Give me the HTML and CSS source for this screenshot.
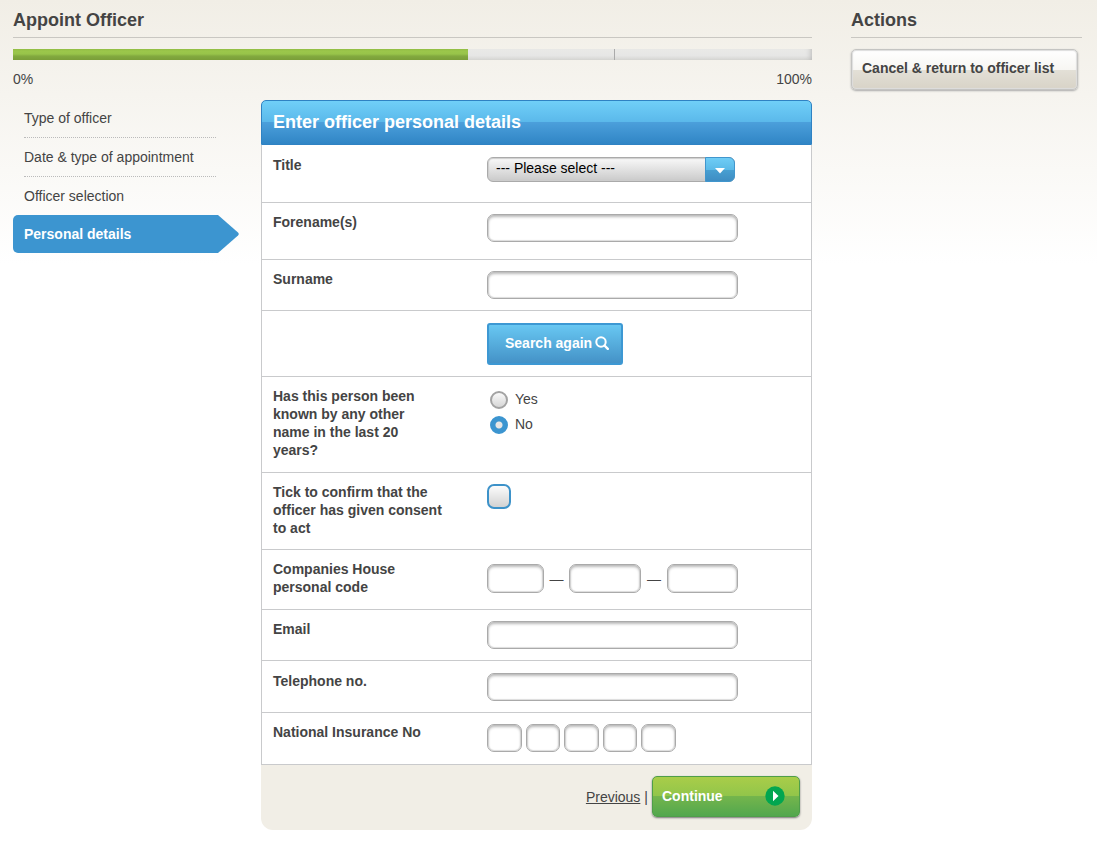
FILE: index.html
```html
<!DOCTYPE html>
<html lang="en">
<head>
<meta charset="utf-8">
<title>Appoint Officer</title>
<link rel="stylesheet" href="styles.css">
</head>
<body>
<div class="page">
  <main class="main">
    <h1 class="heading">Appoint Officer</h1>
    <div class="progress" role="progressbar" aria-label="Progress" aria-valuenow="57" aria-valuemin="0" aria-valuemax="100">
      <div class="progress-done" style="width:57%"></div>
      <div class="progress-step"></div>
    </div>
    <div class="scale"><span>0%</span><span>100%</span></div>

    <div class="columns">
      <nav class="steps" aria-label="Steps">
        <ol class="step-list">
          <li class="step">Type of officer</li>
          <li class="step">Date &amp; type of appointment</li>
          <li class="step">Officer selection</li>
          <li class="step-current" aria-current="step">
            <span class="step-name">Personal details</span>
            <svg class="step-arrow" viewBox="0 0 21 38" aria-hidden="true"><path d="M0 0 20 17.500Q21.500 19 20 20.500L0 38Z" fill="#3c95d0"/></svg>
          </li>
        </ol>
      </nav>

      <form class="form">
        <h2 class="form-title">Enter officer personal details</h2>
        <div class="form-body">
          <div class="row row-tall">
            <label class="label" for="title">Title</label>
            <div class="control">
              <span class="select-wrap">
                <select class="select" id="title"><option>--- Please select ---</option></select>
                <span class="select-arrow" aria-hidden="true"><svg width="12" height="7" viewBox="0 0 12 7"><path d="M1 1h10L6 6.500z" fill="#fff"/></svg></span>
              </span>
            </div>
          </div>
          <div class="row row-medium">
            <label class="label" for="forename">Forename(s)</label>
            <div class="control"><input class="text" id="forename" type="text"></div>
          </div>
          <div class="row">
            <label class="label" for="surname">Surname</label>
            <div class="control"><input class="text" id="surname" type="text"></div>
          </div>
          <div class="row">
            <span></span>
            <div class="control">
              <button class="search" type="button">Search again
                <svg width="14" height="14" viewBox="0 0 14 14" aria-hidden="true"><circle cx="6" cy="6" r="4.700" fill="none" stroke="#fff" stroke-width="2"/><path d="m9.500 9.500 3.300 3.300" stroke="#fff" stroke-width="2.400" stroke-linecap="round"/></svg>
              </button>
            </div>
          </div>
          <div class="row row-roomy" role="radiogroup" aria-labelledby="other-name">
            <span class="label" id="other-name">Has this person been known by any other name in the last 20 years?</span>
            <div class="control radios">
              <label class="choice"><input class="radio" type="radio" name="known">Yes</label>
              <label class="choice"><input class="radio" type="radio" name="known" checked>No</label>
            </div>
          </div>
          <div class="row row-airy">
            <label class="label" for="consent">Tick to confirm that the officer has given consent to act</label>
            <div class="control"><input class="check" id="consent" type="checkbox"></div>
          </div>
          <div class="row row-roomy">
            <label class="label" for="code1">Companies House personal code</label>
            <div class="control code">
              <input class="text" id="code1" type="text"><span>—</span>
              <input class="text" type="text" aria-label="Personal code, part 2"><span>—</span>
              <input class="text" type="text" aria-label="Personal code, part 3">
            </div>
          </div>
          <div class="row">
            <label class="label" for="email">Email</label>
            <div class="control"><input class="text" id="email" type="email"></div>
          </div>
          <div class="row row-low">
            <label class="label" for="phone">Telephone no.</label>
            <div class="control"><input class="text" id="phone" type="tel"></div>
          </div>
          <div class="row row-airy">
            <label class="label" for="ni1">National Insurance No</label>
            <div class="control ni">
              <input class="text" id="ni1" type="text">
              <input class="text" type="text" aria-label="National Insurance, part 2">
              <input class="text" type="text" aria-label="National Insurance, part 3">
              <input class="text" type="text" aria-label="National Insurance, part 4">
              <input class="text" type="text" aria-label="National Insurance, part 5">
            </div>
          </div>
        </div>
        <div class="form-footer">
          <a class="previous" href="#">Previous</a><span>|</span>
          <button class="continue" type="submit">Continue
            <svg width="20" height="20" viewBox="0 0 20 20" aria-hidden="true"><circle cx="10" cy="10" r="9.700" fill="#02a650"/><path d="M8 4.800 13.500 10 8 15.200z" fill="#fff"/></svg>
          </button>
        </div>
      </form>
    </div>
  </main>

  <aside class="actions">
    <h2 class="heading">Actions</h2>
    <button class="cancel" type="button">Cancel &amp; return to officer list</button>
  </aside>
</div>
</body>
</html>
```
FILE: styles.css
```css
* {
  box-sizing: border-box;
}

body {
  margin: 0;
  font: 14px/18px "Liberation Sans", Arial, sans-serif;
  color: #444;
  background: #fff linear-gradient(#f1eee6, #fff) 0 0 / 100% 264px no-repeat;
}

button,
input,
select {
  font: inherit;
  margin: 0;
}

.page {
  display: grid;
  grid-template-columns: minmax(0, 1fr) 231px;
  gap: 39px;
  padding: 8px 15px 12px 13px;
}

.heading {
  margin: 0 0 11px;
  padding-bottom: 5px;
  border-bottom: 1px solid #c9c7c2;
  font-size: 18px;
  line-height: 24px;
}

/* Progress */
.progress {
  display: grid;
  position: relative;
  height: 11px;
  background: linear-gradient(#e9e9e7, #e6e6e5 60%, #d5d5d2);
  box-shadow: inset -6px 0 6px -6px #aaa;
}

.progress-done {
  background: linear-gradient(#92bd45, #9bc64b 20%, #98c44a 45%, #82a93f 65%, #7a9e38);
}

.progress-step {
  position: absolute;
  left: 75%;
  width: 1px;
  height: 100%;
  margin-left: 2px;
  background: #aaa;
}

.scale {
  display: flex;
  justify-content: space-between;
  padding: 10px 0 12px;
}

.columns {
  display: grid;
  grid-template-columns: 226px minmax(0, 1fr);
  gap: 22px;
  align-items: start;
}

/* Steps */
.step-list {
  margin: -1px 0 0;
  padding: 0;
  list-style: none;
}

.step {
  margin: 0 23px 0 11px;
  padding: 10px 0;
  border-bottom: 1px dotted #bbb;
}

.step-current {
  display: flex;
  height: 38px;
  margin-top: -1px;
  color: #fff;
  font-weight: bold;
}

.step-name {
  flex: 1;
  padding: 10px 0 10px 11px;
  border-radius: 5px 0 0 5px;
  background: #3c95d0;
}

.step-arrow {
  width: 21px;
  height: 38px;
}

/* Form */
.form-title {
  margin: 0;
  padding: 10px 11px;
  border: 1px solid #2f82c3;
  border-radius: 5px 5px 0 0;
  background: linear-gradient(#70cff8, #5ab8ea 50%, #4b9fdb 50%, #3085c5);
  color: #fff;
  font-size: 18px;
  line-height: 23px;
}

.form-body {
  border: solid #c9cacc;
  border-width: 0 1px;
  background: #fff;
}

.row {
  display: grid;
  grid-template-columns: 170px minmax(0, 251px);
  gap: 44px;
  padding: 10px 11px 11px;
  border-bottom: 1px solid #c9cacc;
}

.row-low {
  padding-top: 11px;
}

.row-airy {
  padding-bottom: 12px;
}

.row-roomy {
  padding-bottom: 13px;
}

.row-medium {
  padding-bottom: 17px;
}

.row-tall {
  padding-top: 11px;
  padding-bottom: 20px;
}

.label {
  font-weight: bold;
}

.control {
  padding-top: 1px;
}

.text {
  display: block;
  width: 100%;
  min-width: 0;
  height: 28px;
  padding: 4px 8px;
  border: 1px solid #aaa;
  border-radius: 7px;
  background: #fff;
  box-shadow: inset 0 2px 3px #bbb, inset 0 0 1px 1px #ddd;
}

.select-wrap {
  display: block;
  position: relative;
  width: 248px;
}

.select {
  display: block;
  appearance: none;
  width: 100%;
  height: 25px;
  padding: 0 38px 3px 8px;
  border: 1px solid #aaa;
  border-radius: 6px;
  background: linear-gradient(#f9f9f9, #cacaca);
  box-shadow: inset 0 0 1px 1px #ccc;
  color: #000;
}

.select-arrow {
  display: grid;
  position: absolute;
  top: 0;
  right: 0;
  place-items: center;
  width: 30px;
  height: 25px;
  padding-top: 2px;
  border: 1px solid #4196cd;
  border-radius: 0 6px 6px 0;
  background: linear-gradient(#6fcdf6, #5bbae8 50%, #48a0d2 50%, #3e8dc3);
  pointer-events: none;
}

.search {
  display: flex;
  align-items: center;
  gap: 3px;
  height: 42px;
  margin: 1px 0 0;
  padding: 0 12px 2px 16px;
  border: 2px solid #3d98d3;
  border-radius: 3px;
  background: linear-gradient(#68c7f2, #4492c7);
  color: #fff;
  font-weight: bold;
}

.radios {
  display: grid;
  gap: 7px;
  align-content: start;
  padding-top: 3px;
}

.choice {
  display: flex;
  align-items: center;
  gap: 7px;
  height: 18px;
  padding-left: 3px;
}

.radio {
  appearance: none;
  width: 18px;
  height: 18px;
  margin-top: 2px;
  border: 2px solid #a3a3a3;
  border-radius: 50%;
  background: linear-gradient(#f9f9f9, #d6d6d6);
}

.radio:checked {
  border-color: #3c95d0;
  background: radial-gradient(circle, #e6e6e6 3px, #3c95d0 4px);
}

.check {
  display: block;
  appearance: none;
  width: 24px;
  height: 25px;
  border: 2px solid #3d92c9;
  border-radius: 7px;
  background: linear-gradient(#fcfcfc, #d2d2d2);
}

.code {
  display: grid;
  grid-template-columns: 57px 25px 72px 26px minmax(0, 1fr);
  align-items: center;
  align-content: start;
  padding-top: 4px;
  text-align: center;
}

.code .text {
  height: 29px;
}

.ni {
  display: grid;
  grid-template-columns: repeat(5, 1fr);
  gap: 4px;
  width: 189px;
}

.form-footer {
  display: flex;
  justify-content: flex-end;
  align-items: center;
  gap: 4px;
  padding: 11px 12px 13px;
  border-radius: 0 0 12px 12px;
  background: #f1eee6;
}

.previous {
  color: inherit;
}

.continue {
  display: flex;
  justify-content: space-between;
  align-items: center;
  width: 148px;
  height: 41px;
  padding: 0 14px 1px 9px;
  border: 1px solid #4f9e4a;
  border-radius: 5px;
  background: linear-gradient(#a9cd49, #91c54a 50%, #74b54c 50%, #52a74e);
  box-shadow: 0 1px 2px #777;
  color: #fff;
  font-weight: bold;
}

/* Actions */
.cancel {
  display: block;
  width: 227px;
  max-width: 100%;
  height: 41px;
  padding: 0 10px 3px;
  border: 1px solid #c4c4c2;
  border-radius: 5px;
  background: linear-gradient(#fff, #f7f6f3 50%, #e3e0d7 50%, #d8d3c7);
  box-shadow: inset 0 0 1px 1px #ddd, 0 1px 2px #aaa;
  color: #444;
  font-weight: bold;
  text-align: left;
}
```
